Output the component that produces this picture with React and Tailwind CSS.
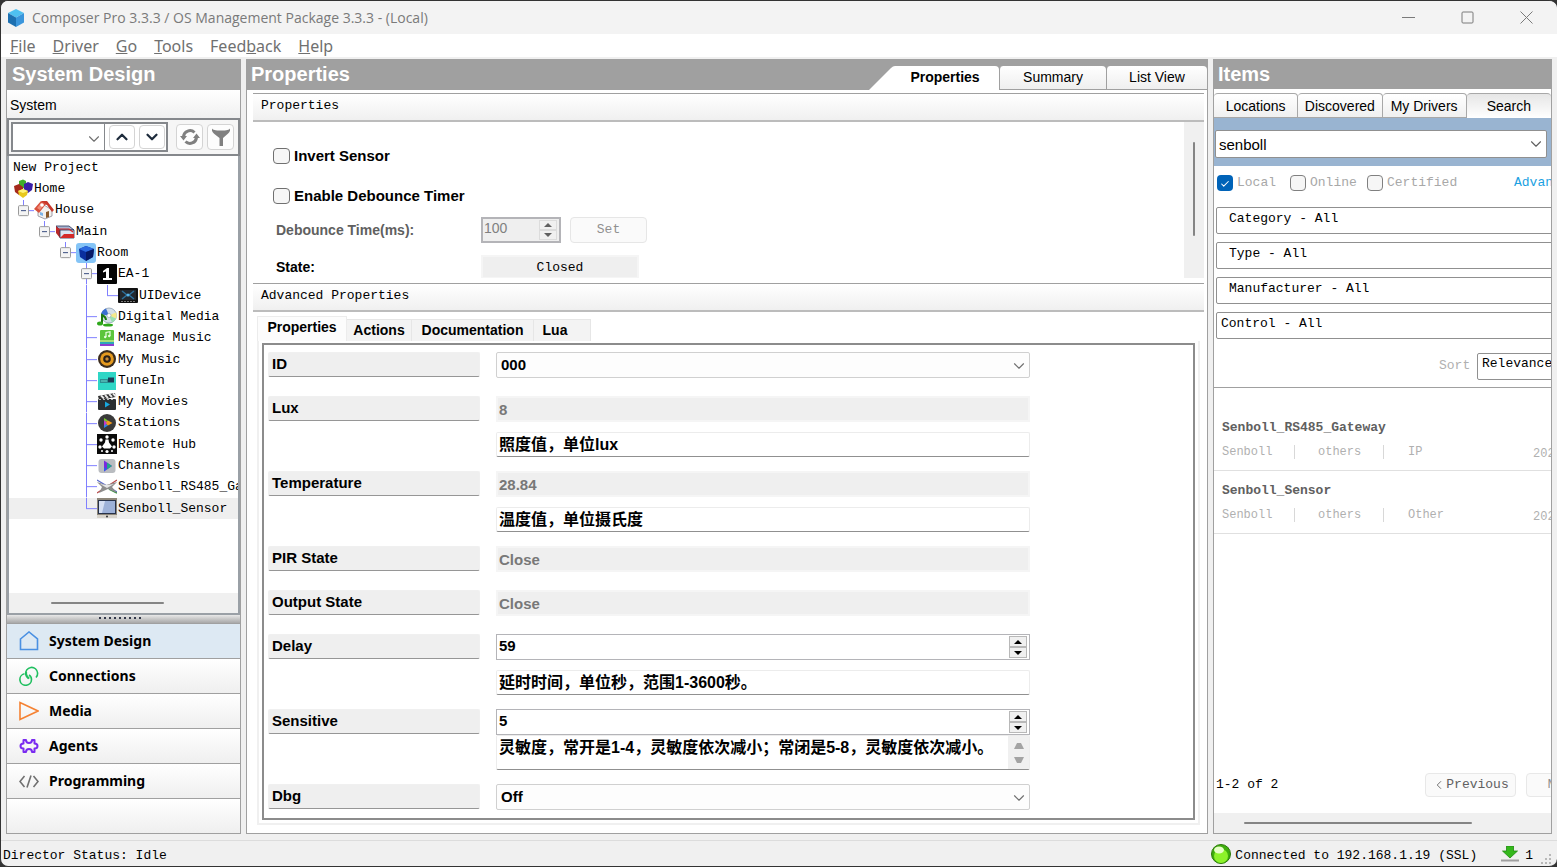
// App.jsx
import React from 'react';
import { ChevronDown, ChevronUp, ChevronLeft, Check } from 'lucide-react';

const treeIcons = {
  home: (
    <svg viewBox="0 0 20 20" className="w-5 h-5">
      <path d="M6 2l4-1.500 3 1.500v6l-4 2-3-2z" fill="#3fae2a" />
      <path d="M1 7l5-2 4 3v6l-4 2-4-3z" fill="#a52a1c" />
      <path d="M11 5l4-2 5 2-1 6-4 3-4-2z" fill="#3a1fa8" />
      <path d="M5 12l5-2 5 2-1 4-4 3-4-3z" fill="#e8c81c" />
      <path d="M5 12l5 2 5-2-5-2z" fill="#fff27a" />
    </svg>
  ),
  house: (
    <svg viewBox="0 0 20 20" className="w-5 h-5">
      <path d="M4 9l6-4 8 5v6l-7 3-7-3z" fill="#f3f1ee" stroke="#8b8b98" strokeWidth="0.8" />
      <path d="M7 1l6 0 7 9-2 2-5-7-3-1z" fill="#c8382b" />
      <path d="M0 9l7-8 5 3-7 9z" fill="#d8503c" />
      <path d="M3 8l4-5 3 2-4 5z" fill="#f08a76" />
      <circle cx="8" cy="5" r="1.800" fill="#fff" />
      <path d="M12 12l3-1v6l-3 1z" fill="#8a5a2a" />
      <path d="M6 12l3 1v3l-3-1z" fill="#7db4e8" />
    </svg>
  ),
  main: (
    <svg viewBox="0 0 20 20" className="w-5 h-5">
      <path d="M1 4h13l5 4H5z" fill="#a8b6d2" stroke="#2a3358" strokeWidth="0.8" />
      <path d="M1 4l4 4v8l-4-5z" fill="#b82828" />
      <path d="M5 8h14v8H5z" fill="#dbe4f2" stroke="#2a3358" strokeWidth="0.8" />
      <path d="M5 16l4-4h10v4H5z" fill="#d42a2a" />
      <path d="M1 7h13l4 3" stroke="#d42a2a" strokeWidth="1.200" fill="none" />
    </svg>
  ),
  room: (
    <svg viewBox="0 0 20 20" className="w-5 h-5">
      <rect width="20" height="20" rx="3" fill="#84c4f6" />
      <path d="M3 6l7-3 8 3-1 8-7 4-6-4z" fill="#0a2f9e" />
      <path d="M3 6l7-3 8 3-8 3z" fill="#2a6ae0" />
      <path d="M10 9l8-3-1 8-7 4z" fill="#061a66" />
    </svg>
  ),
  ea1: (
    <svg viewBox="0 0 20 20" className="w-5 h-5">
      <rect width="20" height="20" rx="1" fill="#050505" />
      <path d="M6 7l4-3h2v10h3v2H6v-2h3V7.500l-3 1z" fill="#fff" />
    </svg>
  ),
  ui: (
    <svg viewBox="0 0 20 20" className="w-5 h-5">
      <rect x="0" y="3" width="20" height="15" rx="1" fill="#111" />
      <rect x="2" y="5" width="16" height="10" fill="#23282e" />
      <path d="M4 6l5 4-5 4M16 6l-5 4 5 4" stroke="#2d6f9a" strokeWidth="1.500" fill="none" />
      <circle cx="10" cy="10" r="1.500" fill="#58b4e8" />
      <path d="M3 16.500h14" stroke="#777" strokeDasharray="2 1" />
    </svg>
  ),
  digital: (
    <svg viewBox="0 0 20 20" className="w-5 h-5">
      <circle cx="12" cy="8.500" r="7.500" fill="#d5dfe8" stroke="#8ea0b4" strokeWidth="0.8" />
      <path d="M12 8.500L9 1.500a8 8 0 0 0-5 6z" fill="#3b6fd0" />
      <path d="M12 8.500l7-3a8 8 0 0 1 0 6z" fill="#f4e98a" />
      <path d="M12 8.500l3 7a8 8 0 0 0 4-4z" fill="#9ae0b0" />
      <circle cx="12" cy="8.500" r="2" fill="#fff" stroke="#8ea0b4" strokeWidth="0.6" />
      <path d="M5 17V8c2 1 4 2 4 5" stroke="#1e7a12" strokeWidth="2" fill="none" />
      <ellipse cx="3" cy="16.500" rx="3" ry="2" fill="#2fa81c" />
      <ellipse cx="11" cy="18" rx="5" ry="1.500" fill="#2fa81c" />
    </svg>
  ),
  manage: (
    <svg viewBox="0 0 20 20" className="w-5 h-5">
      <rect x="3" y="2" width="14" height="11" rx="1" fill="#5cc53c" />
      <path d="M9 9V4.500l4-.8V8" stroke="#e8ffe0" strokeWidth="1.200" fill="none" />
      <circle cx="8.200" cy="9" r="1.200" fill="#e8ffe0" />
      <circle cx="12.200" cy="8" r="1.200" fill="#e8ffe0" />
      <path d="M3 12h14v2H3z" fill="#a8e07a" />
      <path d="M3 14h14v2H3z" fill="#2da7b8" />
      <path d="M3 16h14v2H3z" fill="#8b3fd0" />
    </svg>
  ),
  music: (
    <svg viewBox="0 0 20 20" className="w-5 h-5">
      <circle cx="10" cy="10" r="9" fill="#3a2c1e" />
      <circle cx="10" cy="10" r="6.800" fill="#e59a1f" />
      <circle cx="10" cy="10" r="3.800" fill="#2a2018" />
      <circle cx="10" cy="10" r="1.700" fill="#c88a3a" />
    </svg>
  ),
  tunein: (
    <svg viewBox="0 0 20 20" className="w-5 h-5">
      <rect x="1" y="1" width="18" height="18" fill="#2fd6c6" />
      <rect x="3" y="8" width="8" height="4" fill="#2b8f92" />
      <rect x="11" y="6.500" width="6" height="5" fill="#1c3c56" />
      <path d="M4 10h6" stroke="#7fe6dc" strokeWidth="0.8" />
    </svg>
  ),
  movies: (
    <svg viewBox="0 0 20 20" className="w-5 h-5">
      <rect x="1" y="7" width="18" height="11" rx="1" fill="#2a2f33" />
      <path d="M1 4l17-3 .8 4L2 8z" fill="#333" />
      <path d="M4 3.500l3 3M8 3l3 3M12 2l3 3M16 1.500l3 3" stroke="#e8e8e8" strokeWidth="1.800" />
      <path d="M2 7.500h16" stroke="#bbb" strokeDasharray="2 2" />
      <path d="M8 9.500l5 3-5 3z" fill="#18a8e0" />
    </svg>
  ),
  stations: (
    <svg viewBox="0 0 20 20" className="w-5 h-5">
      <circle cx="10" cy="10" r="9" fill="#3a3a3a" />
      <path d="M7 5l4 2.500L7 10z" fill="#7ac92c" />
      <path d="M7 10l4-2.500 4.500 2.500-4.500 2.500z" fill="#f09a1a" />
      <path d="M7 15l4-2.500L7 10z" fill="#2a8ae8" />
      <path d="M7 7v6l3-3z" fill="#c23ad0" />
    </svg>
  ),
  hub: (
    <svg viewBox="0 0 20 20" className="w-5 h-5">
      <rect width="20" height="20" fill="#0a0a0a" />
      <g fill="#fff">
        <path d="M8.500 5.500h3l.5 3 3 4-2 2H7l-2-2 3-4z" />
        <circle cx="10" cy="3" r="1.700" />
        <circle cx="4" cy="6" r="1.700" />
        <circle cx="16" cy="6" r="1.700" />
        <circle cx="3" cy="13" r="1.700" />
        <circle cx="17" cy="13" r="1.700" />
        <circle cx="10" cy="17.500" r="1.600" />
        <circle cx="5" cy="17" r="1" />
        <circle cx="15" cy="17" r="1" />
      </g>
    </svg>
  ),
  channels: (
    <svg viewBox="0 0 20 20" className="w-5 h-5">
      <rect x="1.500" y="3" width="17" height="14" rx="3" fill="#b9bcc0" />
      <path d="M7 4.500l8 5.500-8 5.500z" fill="#7a2be0" />
      <path d="M10 6.500l5 3.500-5 3.500z" fill="#1fa88a" />
      <path d="M7 11l3 2-3 2.500z" fill="#2a62e8" />
    </svg>
  ),
  gateway: (
    <svg viewBox="0 0 20 20" className="w-5 h-5">
      <path d="M0 3l20 12" stroke="#5a6ac8" strokeWidth="1.200" />
      <path d="M20 3L0 16" stroke="#b84a4a" strokeWidth="1.200" />
      <path d="M12 12l8 4" stroke="#2f8f3a" strokeWidth="1.500" />
      <path d="M0 5l9 3 11-3-5 5 5 6-9-4-9 4 3-6z" fill="#8d8d8d" />
      <path d="M3 7l7 4 7-4-7 1z" fill="#e6e6e6" />
    </svg>
  ),
  sensor: (
    <svg viewBox="0 0 20 20" className="w-5 h-5">
      <rect width="20" height="20" fill="#8d867a" />
      <rect x="1" y="2" width="18" height="14" fill="#27324a" />
      <rect x="2" y="3" width="16" height="12" fill="#9db1d8" />
      <path d="M2 3h6l-3 12H2z" fill="#d4def2" />
      <path d="M0 17h20v3H0z" fill="#d8d4cc" />
      <circle cx="10" cy="18.500" r="1" fill="#333" />
    </svg>
  ),
};

const treeRows = [
  { name: 'Home', icon: 'home', guides: [] },
  { name: 'House', icon: 'house', guides: ['box'] },
  { name: 'Main', icon: 'main', guides: ['none', 'box'] },
  { name: 'Room', icon: 'room', guides: ['none', 'none', 'box'] },
  { name: 'EA-1', icon: 'ea1', guides: ['none', 'none', 'none', 'boxtee'] },
  { name: 'UIDevice', icon: 'ui', guides: ['none', 'none', 'none', 'line', 'end'] },
  { name: 'Digital Media', icon: 'digital', guides: ['none', 'none', 'none', 'tee'] },
  { name: 'Manage Music', icon: 'manage', guides: ['none', 'none', 'none', 'tee'] },
  { name: 'My Music', icon: 'music', guides: ['none', 'none', 'none', 'tee'] },
  { name: 'TuneIn', icon: 'tunein', guides: ['none', 'none', 'none', 'tee'] },
  { name: 'My Movies', icon: 'movies', guides: ['none', 'none', 'none', 'tee'] },
  { name: 'Stations', icon: 'stations', guides: ['none', 'none', 'none', 'tee'] },
  { name: 'Remote Hub', icon: 'hub', guides: ['none', 'none', 'none', 'tee'] },
  { name: 'Channels', icon: 'channels', guides: ['none', 'none', 'none', 'tee'] },
  { name: 'Senboll_RS485_Gateway', icon: 'gateway', guides: ['none', 'none', 'none', 'tee'] },
  { name: 'Senboll_Sensor', icon: 'sensor', guides: ['none', 'none', 'none', 'end'], selected: true },
];

const Guide = ({ type }) => {
  const full = type === 'line' || type === 'tee' || type === 'boxtee';
  const box = type === 'box' || type === 'boxtee';
  return (
    <svg className="w-[21px] h-full shrink-0" stroke="#8080ff">
      {type !== 'none' && <line x1="10.500" x2="10.500" y1="0" y2={full ? '100%' : '50%'} />}
      {type !== 'none' && type !== 'line' && <line x1="10" x2="21" y1="50%" y2="50%" />}
      {box && (
        <svg y="50%" overflow="visible">
          <rect x="5.500" y="-5" width="10" height="10" rx="1" fill="#f4f4f4" stroke="#9a9a9a" />
          <path d="M8 0h5" stroke="#3b4f81" />
        </svg>
      )}
    </svg>
  );
};

const navItems = [
  {
    name: 'System Design',
    active: true,
    icon: <path d="M1.500 8L10 1l8.500 7v10.500h-17z" stroke="#4a90e2" />,
  },
  {
    name: 'Connections',
    icon: (
      <g stroke="#1fbf5f">
        <path d="M9.500 12.500a6 6 0 1 1 7.500-1" />
        <path d="M5.500 7.800a5.800 5.800 0 1 0 7 5.700c0-2-.8-3.500-2.500-4.500" />
        <path d="M7.300 6c-.3 2.800.5 4.800 3 6.500" />
      </g>
    ),
  },
  { name: 'Media', icon: <path d="M1 1.500v17L19 10z" stroke="#f58233" /> },
  {
    name: 'Agents',
    icon: (
      <path
        d="M4.500 4h2.500c0 4 6 4 6 0h2.500v3.500c4 0 4 5 0 5V16H13c0-4-6-4-6 0H4.500v-3.500c-4 0-4-5 0-5z"
        stroke="#7a2bf0"
        strokeWidth="2"
        strokeLinejoin="round"
      />
    ),
  },
  {
    name: 'Programming',
    icon: <path d="M5.500 5L1 10.500 5.500 16M14.500 5l4.500 5.500-4.500 5.500M12 4.500L8 16.500" stroke="#707070" />,
  },
];

const properties = [
  { id: 'prop-id', name: 'ID', type: 'select', value: '000' },
  { id: 'prop-lux', name: 'Lux', type: 'readonly', value: '8', note: '照度值，单位lux' },
  { id: 'prop-temp', name: 'Temperature', type: 'readonly', value: '28.84', note: '温度值，单位摄氏度' },
  { id: 'prop-pir', name: 'PIR State', type: 'readonly', value: 'Close' },
  { id: 'prop-output', name: 'Output State', type: 'readonly', value: 'Close' },
  { id: 'prop-delay', name: 'Delay', type: 'number', value: '59', note: '延时时间，单位秒，范围1-3600秒。' },
  {
    id: 'prop-sensitive',
    name: 'Sensitive',
    type: 'number',
    value: '5',
    note: '灵敏度，常开是1-4，灵敏度依次减小；常闭是5-8，灵敏度依次减小。',
    scroll: true,
  },
  { id: 'prop-dbg', name: 'Dbg', type: 'select', value: 'Off' },
];

const Spinner = ({ disabled }) => (
  <span className="flex flex-col w-[18px] my-px mr-0.5 shrink-0">
    <button
      type="button"
      aria-label="Increase"
      disabled={disabled}
      className="flex-1 flex items-center justify-center border border-[#b8b8b8] bg-[#f0f0f0] text-black disabled:text-[#606060] disabled:border-[#dcdcdc]"
    >
      <svg viewBox="0 0 8 4" className="w-2 h-1"><path d="M0 4l4-4 4 4z" fill="currentColor" /></svg>
    </button>
    <button
      type="button"
      aria-label="Decrease"
      disabled={disabled}
      className="flex-1 flex items-center justify-center border border-[#b8b8b8] bg-[#f0f0f0] text-black disabled:text-[#606060] disabled:border-[#dcdcdc]"
    >
      <svg viewBox="0 0 8 4" className="w-2 h-1"><path d="M0 0l4 4 4-4z" fill="currentColor" /></svg>
    </button>
  </span>
);

const PropertyField = ({ item }) => {
  if (item.type === 'select') {
    return (
      <div className="relative h-[26px]">
        <select
          id={item.id}
          className="w-full h-full appearance-none border border-[#d0d0d0] rounded-xs bg-[#fdfdfd] px-1 text-[15px] font-bold"
        >
          <option>{item.value}</option>
        </select>
        <ChevronDown className="absolute right-0.5 top-[5px] w-[18px] h-[18px] text-[#707070] pointer-events-none" strokeWidth={1.5} />
      </div>
    );
  }
  if (item.type === 'number') {
    return (
      <div className="flex h-[26px] border border-[#b4b4b8]">
        <input id={item.id} defaultValue={item.value} className="flex-1 min-w-0 px-0.5 pb-0.5 text-[15px] font-bold outline-none" />
        <Spinner />
      </div>
    );
  }
  return (
    <input
      id={item.id}
      readOnly
      value={item.value}
      className="block w-full h-[26px] border-2 border-[#f5f5f5] bg-[#efefef] px-px text-[15px] font-bold text-[#787878]"
    />
  );
};

const PropertyRow = ({ item }) => (
  <div className={item.note ? 'flex gap-4 h-[75px]' : 'flex gap-4 h-11 last:h-[34px]'}>
    <label
      htmlFor={item.id}
      className="block w-[212px] h-[25px] leading-[22px] px-[3px] border border-[#f0f0f0] border-b-[#969696] rounded-xs bg-[#efefef] font-bold text-[15px]"
    >
      {item.name}
    </label>
    <div className="w-[534px]">
      <PropertyField item={item} />
      {item.note && (
        <div
          className={
            item.scroll
              ? 'flex h-[35px] border border-[#ececec] border-b-[#909090] rounded-xs'
              : 'flex h-[25px] mt-2.5 border border-[#ececec] border-b-[#909090] rounded-xs'
          }
        >
          <input
            readOnly
            aria-label={item.name + ' help'}
            value={item.note}
            className={
              item.scroll
                ? "flex-1 min-w-0 h-6 px-0.5 font-bold text-base font-['Liberation_Sans','Noto_Sans_CJK_SC',sans-serif] outline-none"
                : "flex-1 min-w-0 px-0.5 font-bold text-base font-['Liberation_Sans','Noto_Sans_CJK_SC',sans-serif] outline-none"
            }
          />
          {item.scroll && (
            <span className="flex flex-col items-center justify-center gap-2 w-[21px] bg-[#f0f0f0]">
              <svg viewBox="0 0 10 7" className="w-2.5 h-[7px]"><path d="M0 7l3-6h4l3 6z" fill="#a3a3a3" /></svg>
              <svg viewBox="0 0 10 7" className="w-2.5 h-[7px]"><path d="M0 0l3 6h4l3-6z" fill="#a3a3a3" /></svg>
            </span>
          )}
        </div>
      )}
    </div>
  </div>
);

const SectionHeader = ({ children }) => (
  <h3 className="h-[29px] shrink-0 px-2 leading-6 border-t border-t-[#a0a0a0] border-b-2 border-b-[#bcbcbc] bg-linear-to-b from-white to-[#f0f0f0] font-['Liberation_Mono',monospace] text-[13px]">
    {children}
  </h3>
);

const SystemPanel = () => (
  <aside className="flex flex-col w-[235px] shrink-0 border border-[#a0a0a0] border-t-0 bg-white">
    <h2 className="h-[31px] shrink-0 px-[5px] leading-[31px] bg-[#a0a0a0] text-white text-xl font-bold">System Design</h2>
    <div className="h-7 shrink-0 px-[3px] leading-[30px] text-sm bg-linear-to-b from-white to-[#f0f0f0]">System</div>
    <div className="flex items-center h-[38px] shrink-0 pl-0.5 pr-1 border-2 border-[#85888c] bg-[#f6f6f6]">
      <div className="flex items-center gap-1 h-[30px] pr-px border-2 border-[#85888c] bg-white">
        <div className="relative h-full">
          <select aria-label="Search history" className="w-[92px] h-full appearance-none border-r border-[#85888c]" />
          <ChevronDown className="absolute right-0.5 top-1.5 w-[18px] h-[18px] text-[#707070] pointer-events-none" strokeWidth={1.5} />
        </div>
        <button type="button" aria-label="Previous match" className="flex items-center justify-center w-[26px] h-6 border border-[#d4d4d4] rounded">
          <ChevronUp className="w-[18px] h-[18px] text-[#1f2d3d]" strokeWidth={3} />
        </button>
        <button type="button" aria-label="Next match" className="flex items-center justify-center w-[26px] h-6 border border-[#d4d4d4] rounded">
          <ChevronDown className="w-[18px] h-[18px] text-[#1f2d3d]" strokeWidth={3} />
        </button>
      </div>
      <button type="button" aria-label="Refresh" className="flex items-center justify-center ml-auto w-[27px] h-[26px] border border-[#d4d4d4] rounded bg-[#fdfdfd]">
        <svg viewBox="0 0 20 20" className="w-5 h-5" fill="none" stroke="#808080" strokeWidth="3">
          <path d="M3.500 9.500a6.500 6.500 0 0 1 11-4" />
          <path d="M16.500 10.500a6.500 6.500 0 0 1-11 4" />
          <path d="M0 9h7l-3.500 4.500zM20 11h-7l3.500-4.500z" fill="#808080" stroke="none" />
        </svg>
      </button>
      <button type="button" aria-label="Filter" className="flex items-center justify-center ml-1 w-[27px] h-[26px] border border-[#d4d4d4] rounded bg-[#fdfdfd]">
        <svg viewBox="0 0 20 20" className="w-5 h-5" fill="#808080">
          <path d="M1 1.500c1 1.500 3 2 9 2s8-.5 9-2c.5 3-1 4.500-3 6L12 11v8H8.500v-8L4 7.500c-2-1.500-3.500-3-3-6z" />
        </svg>
      </button>
    </div>
    <div className="flex-1 flex flex-col pt-px border-2 border-t-0 border-[#9aa0a6]">
      <ul className="grid auto-rows-fr h-[362px] shrink-0 font-['Liberation_Mono',monospace] text-[13px] overflow-hidden">
        <li className="flex items-center pl-1">New Project</li>
        {treeRows.map((row) => (
          <li key={row.name} className={row.selected ? 'flex items-center pl-1 bg-[#efefef]' : 'flex items-center pl-1'}>
            {row.guides.map((g, i) => (
              <Guide key={i} type={g} />
            ))}
            <span className="shrink-0">{treeIcons[row.icon]}</span>
            <span className="pl-px whitespace-nowrap">{row.name}</span>
          </li>
        ))}
      </ul>
      <div className="flex items-center mt-auto h-5 bg-[#f0f0f0]">
        <div className="ml-[42px] w-[113px] h-0.5 rounded bg-[#858585]" />
      </div>
    </div>
    <div className="flex items-start justify-center gap-[3px] h-[9px] shrink-0 pt-0.5 pr-2 border-b border-[#a0a0a0] bg-linear-to-b from-[#e8e8e8] to-[#a8a8a8]">
      {[...Array(9)].map((_, i) => (
        <span key={i} className="w-0.5 h-0.5 bg-[#33384a]" />
      ))}
    </div>
    <nav className="shrink-0">
      {navItems.map((item) => (
        <a
          key={item.name}
          href="#"
          className={
            item.active
              ? "flex items-center gap-2.5 h-[35px] pl-3 border-b border-[#a0a0a0] bg-[#dde9f3] font-['Noto_Sans',sans-serif] text-sm font-bold"
              : "flex items-center gap-2.5 h-[35px] pl-3 border-b border-[#a0a0a0] bg-linear-to-b from-white to-[#efefef] font-['Noto_Sans',sans-serif] text-sm font-bold"
          }
        >
          <svg viewBox="0 0 20 20" className="w-5 h-5" fill="none" strokeWidth="1.600">
            {item.icon}
          </svg>
          {item.name}
        </a>
      ))}
      <div className="h-[34px] bg-linear-to-b from-white to-[#efefef]" />
    </nav>
  </aside>
);

const PropertiesPanel = () => (
  <main className="flex flex-col flex-1 min-w-0 border border-[#a0a0a0] border-t-0 bg-white">
    <div className="flex justify-between h-[31px] shrink-0 bg-[#a0a0a0]">
      <h2 className="px-1 leading-[31px] text-white text-xl font-bold">Properties</h2>
      <div className="flex items-end text-sm">
        <svg viewBox="0 0 26 24" className="w-[26px] h-6"><path d="M0 24L22 2q2-2 4-2v24z" fill="#fff" /></svg>
        <button type="button" className="w-[104px] h-6 pr-1 pb-[3px] rounded-tr-sm bg-white font-bold">Properties</button>
        <button type="button" className="w-[107px] h-6 pb-0.5 border border-t-0 border-r-0 border-[#a0a0a0] rounded-t-sm bg-linear-to-b from-white to-[#efefef]">Summary</button>
        <button type="button" className="w-[101px] h-6 pb-0.5 border border-t-0 border-r-0 border-[#a0a0a0] rounded-t-sm bg-linear-to-b from-white to-[#efefef]">List View</button>
      </div>
    </div>
    <div className="flex flex-col flex-1 pl-1.5 pr-[3px] pt-[3px] pb-2">
      <SectionHeader>Properties</SectionHeader>
      <section className="flex h-[156px] mb-[5px] overflow-hidden">
        <div className="flex-1 pl-5 pt-6 text-[15px] font-bold">
          <div className="flex items-center gap-1 h-5">
            <input id="invert" type="checkbox" className="w-[17px] h-4 appearance-none border border-[#707070] rounded bg-[#f6f6f6]" />
            <label htmlFor="invert">Invert Sensor</label>
          </div>
          <div className="flex items-center gap-1 h-5 mt-5">
            <input id="debounce" type="checkbox" className="w-[17px] h-4 appearance-none border border-[#707070] rounded bg-[#f6f6f6]" />
            <label htmlFor="debounce">Enable Debounce Timer</label>
          </div>
          <div className="flex items-center h-[26px] mt-[11px] pl-[3px]">
            <label htmlFor="time" className="w-[205px] text-sm text-[#606060]">Debounce Time(ms):</label>
            <div className="flex w-20 h-[26px] border-2 border-[#b4b4b8] bg-[#efefef]">
              <input id="time" disabled defaultValue="100" className="flex-1 min-w-0 pl-px pb-1 text-sm font-normal text-[#808080]" />
              <Spinner disabled />
            </div>
            <button
              type="button"
              disabled
              className="ml-[9px] w-[77px] h-[26px] border border-[#e6e6e6] rounded bg-[#fafafa] font-['Liberation_Mono',monospace] text-[13px] font-normal text-[#909090]"
            >
              Set
            </button>
          </div>
          <div className="flex items-center h-6 mt-3 pl-[3px]">
            <label htmlFor="state" className="w-[205px] text-sm">State:</label>
            <input
              id="state"
              readOnly
              value="Closed"
              className="w-[158px] h-6 border-2 border-[#f5f5f5] bg-[#efefef] text-center font-['Liberation_Mono',monospace] text-[13px] font-normal"
            />
          </div>
        </div>
        <div className="flex justify-center w-5 pt-5 bg-[#f0f0f0]">
          <div className="w-0.5 h-[94px] rounded bg-[#858585]" />
        </div>
      </section>
      <SectionHeader>Advanced Properties</SectionHeader>
      <div className="flex items-end h-[29px] pl-1 text-sm font-bold">
        <button type="button" className="w-[90px] h-[25px] pb-1 border border-b-0 border-[#ececec] bg-[#fcfcfc]">Properties</button>
        <button type="button" className="w-[65px] h-[22px] pb-0.5 border-t border-r border-[#e6e6e6] bg-[#f3f3f3]">Actions</button>
        <button type="button" className="w-[122px] h-[22px] pb-0.5 border-t border-r border-[#e6e6e6] bg-[#f3f3f3]">Documentation</button>
        <button type="button" className="w-[57px] h-[22px] pb-0.5 pr-3.5 border-t border-r border-[#e6e6e6] bg-[#f3f3f3]">Lua</button>
      </div>
      <div className="flex flex-col flex-1 ml-1 mr-1 p-[3px] pt-0.5 border-2 border-t-0 border-[#f0f0f0]">
        <form className="flex-1 pt-[7px] pl-1 border-2 border-[#8c8c8c]">
          {properties.map((item) => (
            <PropertyRow key={item.id} item={item} />
          ))}
        </form>
      </div>
    </div>
  </main>
);

const filters = [
  { name: 'Category - All', cls: 'pl-3' },
  { name: 'Type - All', cls: 'pl-3' },
  { name: 'Manufacturer - All', cls: 'pl-3' },
  { name: 'Control - All', cls: 'pl-1' },
];

const results = [
  { name: 'Senboll_RS485_Gateway', kind: 'IP' },
  { name: 'Senboll_Sensor', kind: 'Other' },
];

const ItemsPanel = () => (
  <aside className="flex flex-col w-[339px] shrink-0 border border-[#a0a0a0] border-t-0 bg-white overflow-hidden">
    <h2 className="h-[30px] shrink-0 px-1 leading-[31px] bg-[#a0a0a0] text-white text-xl font-bold">Items</h2>
    <div className="grid grid-cols-4 h-[29px] shrink-0 pt-1 text-sm whitespace-nowrap">
      <button type="button" className="border border-[#a8a8a8] border-l-0 rounded-t-sm bg-linear-to-b from-white to-[#f0f0f0]">Locations</button>
      <button type="button" className="border border-[#a8a8a8] border-l-0 rounded-t-sm bg-linear-to-b from-white to-[#f0f0f0]">Discovered</button>
      <button type="button" className="border border-[#a8a8a8] border-l-0 rounded-t-sm bg-linear-to-b from-white to-[#f0f0f0]">My Drivers</button>
      <button type="button" className="border-t border-[#a8a8a8] rounded-t-sm bg-linear-to-b from-[#e6e6e6] to-white">Search</button>
    </div>
    <div className="h-12 shrink-0 pt-3 pl-px pr-1 bg-[#99b4d1]">
      <div className="relative h-7">
        <input aria-label="Search drivers" defaultValue="senboll" className="w-full h-full px-[3px] border border-[#909090] rounded-xs bg-white text-[15px]" />
        <ChevronDown className="absolute right-0.5 top-[5px] w-[18px] h-[18px] text-[#606060]" strokeWidth={1.5} />
      </div>
    </div>
    <div className="flex flex-col flex-1 w-[400px] font-['Liberation_Mono',monospace] text-[13px]">
      <div className="flex items-center h-[34px] shrink-0 pl-[3px] text-[#a8a8a8]">
        <label className="flex items-center gap-1 w-[73px]">
          <span className="relative flex w-4 h-4">
            <input type="checkbox" defaultChecked className="w-4 h-4 appearance-none rounded bg-[#0063b8]" />
            <Check className="absolute left-[3px] top-1 w-2.5 h-2.5 text-white pointer-events-none" strokeWidth={2.5} />
          </span>
          Local
        </label>
        <label className="flex items-center gap-1 w-[77px]">
          <input type="checkbox" className="w-4 h-4 shrink-0 appearance-none border border-[#808080] rounded bg-[#f6f6f6]" />
          Online
        </label>
        <label className="flex items-center gap-1 w-[147px]">
          <input type="checkbox" className="w-4 h-4 shrink-0 appearance-none border border-[#808080] rounded bg-[#f6f6f6]" />
          Certified
        </label>
        <a href="#" className="text-[#1ba1e2]">Advanced</a>
      </div>
      <div className="flex flex-col gap-2 pt-[7px] pl-0.5 shrink-0">
        {filters.map((f) => (
          <button key={f.name} type="button" className="h-[27px] pb-1 border border-[#909090] rounded-xs text-left">
            <span className={f.cls}>{f.name}</span>
          </button>
        ))}
      </div>
      <div className="flex items-center h-[49px] shrink-0 pl-[225px] pt-1.5 border-b border-[#a0a0a0]">
        <label htmlFor="sort" className="w-[38px] text-[#b0b0b0]">Sort</label>
        <select id="sort" className="w-28 h-[27px] pl-1 pb-1 appearance-none border border-[#909090] rounded-xs">
          <option>Relevance</option>
        </select>
      </div>
      <ul className="pt-5">
        {results.map((r) => (
          <li key={r.name} className="h-[63px] pl-2 pt-2.5 border-b border-[#e0e0e0]">
            <p className="font-bold leading-5 text-[#606060]">{r.name}</p>
            <p className="flex items-center mt-0.5 text-xs leading-5 text-[#b0b0b0]">
              <span className="w-[72px]">Senboll</span>
              <span className="w-px h-3.5 mr-[23px] bg-[#d8d8d8]" />
              <span className="w-[65px]">others</span>
              <span className="w-px h-3.5 mr-6 bg-[#d8d8d8]" />
              <span className="w-[125px]">{r.kind}</span>
              <span className="pt-1">2022-08-12</span>
            </p>
          </li>
        ))}
      </ul>
      <div className="flex items-center mt-auto mb-4 h-6 pl-0.5">
        <span className="w-[209px]">1-2 of 2</span>
        <button type="button" className="flex items-center justify-center w-[91px] h-6 border border-[#e8e8e8] rounded bg-[#fafafa] text-[#606060]">
          <ChevronLeft className="w-3.5 h-3.5" strokeWidth={1.5} />
          Previous
        </button>
        <button type="button" className="ml-2.5 w-[74px] h-6 border border-[#e8e8e8] rounded bg-[#fafafa] text-[#909090]">Next</button>
      </div>
    </div>
    <div className="flex items-center h-5 shrink-0 bg-[#f0f0f0]">
      <div className="ml-[30px] w-[228px] h-0.5 rounded bg-[#858585]" />
    </div>
  </aside>
);

const App = () => {
  return (
    <div className="min-h-screen bg-[#333] font-['Liberation_Sans',Arial,sans-serif] text-black">
      <div className="flex flex-col min-h-screen border-t border-l border-b border-[#333] rounded-lg bg-[#f0f0f0] overflow-hidden">
        <header className="flex items-center h-[33px] shrink-0 pl-[7px] pr-6 bg-[#f3f3f3] text-[#7a7a7a]">
          <svg viewBox="0 0 16 18" className="w-4 h-[18px]">
            <path d="M8 0l8 4-8 4.500L0 4z" fill="#4fc0f0" />
            <path d="M0 4l8 4.500V18l-8-4.500z" fill="#1c6fb0" />
            <path d="M16 4L8 8.500V18l8-4.500z" fill="#3a96dc" />
          </svg>
          <h1 className="ml-2 font-['Open_Sans',sans-serif] text-sm">Composer Pro 3.3.3 / OS Management Package 3.3.3 - (Local)</h1>
          <div className="flex items-center gap-[46px] ml-auto">
            <button type="button" aria-label="Minimize">
              <svg viewBox="0 0 13 13" className="w-[13px] h-[13px]" stroke="#7a7a7a" fill="none"><path d="M0 6.500h13" /></svg>
            </button>
            <button type="button" aria-label="Maximize">
              <svg viewBox="0 0 13 13" className="w-[13px] h-[13px]" stroke="#7a7a7a" fill="none"><rect x="1" y="1" width="11" height="11" rx="1" /></svg>
            </button>
            <button type="button" aria-label="Close">
              <svg viewBox="0 0 13 13" className="w-[13px] h-[13px]" stroke="#7a7a7a" fill="none"><path d="M.5 .5l12 12M12.500 .5l-12 12" /></svg>
            </button>
          </div>
        </header>
        <nav className="flex items-center gap-[17px] h-[23px] shrink-0 pl-[9px] bg-white text-[#707070] font-['Noto_Sans',sans-serif] text-base">
          <a href="#"><u>F</u>ile</a>
          <a href="#"><u>D</u>river</a>
          <a href="#"><u>G</u>o</a>
          <a href="#"><u>T</u>ools</a>
          <a href="#">Feed<u>b</u>ack</a>
          <a href="#"><u>H</u>elp</a>
        </nav>
        <div className="flex gap-[5px] flex-1 pt-0.5 pl-[5px] pr-[5px] pb-1.5">
          <SystemPanel />
          <PropertiesPanel />
          <ItemsPanel />
        </div>
        <footer className="flex items-center h-[26px] shrink-0 pl-0.5 pr-1 border-t border-[#dcdcdc] font-['Liberation_Mono',monospace] text-[13px]">
          <span className="pt-1">Director Status: Idle</span>
          <svg viewBox="0 0 20 20" className="ml-auto w-5 h-5">
            <circle cx="10" cy="10" r="9.500" fill="#3fae0c" stroke="#2c7a08" />
            <circle cx="10" cy="12" r="7" fill="#8df22a" />
            <ellipse cx="8" cy="6" rx="5" ry="3.500" fill="#e6ffc8" />
          </svg>
          <span className="pl-1 pt-1">Connected to 192.168.1.19 (SSL)</span>
          <svg viewBox="0 0 18 16" className="ml-6 w-[18px] h-4">
            <path d="M5.500 0h7v5h4L9 12 1.500 5h4z" fill="#35b81c" stroke="#1f8a10" strokeWidth="0.8" />
            <path d="M0 14.500h18" stroke="#a0a0a0" strokeWidth="2" />
          </svg>
          <span className="pl-1.5 pt-1">1</span>
          <svg viewBox="0 0 12 12" className="self-end ml-2 w-3 h-3" fill="#b8b8b8">
            <path d="M8 0h2v2H8zM4 4h2v2H4zM8 4h2v2H8zM0 8h2v2H0zM4 8h2v2H4zM8 8h2v2H8z" />
          </svg>
        </footer>
      </div>
    </div>
  );
};

export default App;
